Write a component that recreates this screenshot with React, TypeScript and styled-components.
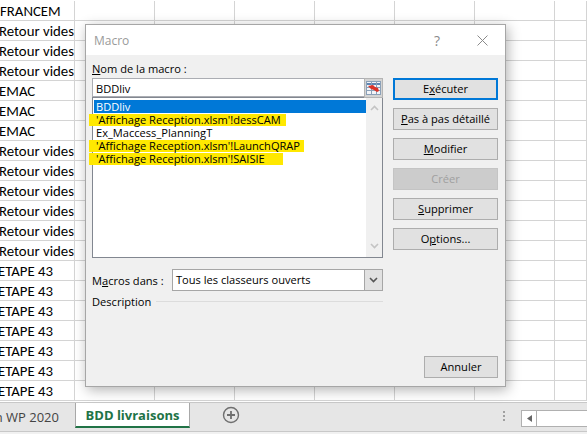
import React from "react";
import styled, { createGlobalStyle } from "styled-components";

const GlobalStyle = createGlobalStyle`
  html, body {
    margin: 0;
    padding: 0;
    background: #fff;
  }
  body {
    width: 587px;
    height: 434px;
    overflow: hidden;
  }
`;

const Page = styled.div`
  position: relative;
  width: 587px;
  height: 434px;
  overflow: hidden;
  background: #fff;
`;

// Sheet
const Sheet = styled.div`
  display: grid;
  grid-template-columns: 75px repeat(6, 80px) 32px;
  grid-auto-rows: 20px;
  box-sizing: border-box;
  height: 402px;
  padding-top: 1px;
  overflow: hidden;
`;

const Cell = styled.div<{ $shift?: number }>`
  border-right: 1px solid #d4d4d4;
  border-bottom: 1px solid #d4d4d4;
  box-sizing: border-box;
  font: 14.8px/20px Carlito, Lato, sans-serif;
  color: #000;
  white-space: nowrap;
  overflow: hidden;
  text-indent: ${(p) => p.$shift ?? 0}px;
`;

// Tabs
const TabBar = styled.div`
  display: flex;
  align-items: flex-start;
  height: 28px;
  background: #e6e6e6;
  border-top: 1px solid #c8c8c8;
  border-bottom: 1px solid #c8c8c8;
  overflow: hidden;
`;

const OtherTab = styled.div`
  width: 75px;
  height: 24px;
  text-align: right;
  padding-right: 16px;
  box-sizing: border-box;
  white-space: nowrap;
  overflow: hidden;
  font: 13px/29px "Open Sans", sans-serif;
  color: #444;
  direction: rtl;
`;

const ActiveTab = styled.div`
  width: 115px;
  height: 26px;
  box-sizing: border-box;
  background: #fff;
  border-left: 1px solid #a8a8a8;
  border-right: 1px solid #a8a8a8;
  border-bottom: 2px solid #217346;
  color: #217346;
  font: 700 13px/27px "Open Sans", sans-serif;
  text-align: center;
  margin-top: -1px;
`;

const AddTab = styled.div`
  margin: 3px 0 0 32px;
  width: 18px;
  height: 18px;
  color: #6f6f6f;
`;

const TabSpacer = styled.div`
  flex: 1;
`;

const SplitDots = styled.div`
  display: flex;
  flex-direction: column;
  gap: 2px;
  margin: 8px 16px 0 0;
  & > i {
    width: 2px;
    height: 2px;
    background: #a0a0a0;
  }
`;

const ScrollLeft = styled.div`
  display: flex;
  align-items: center;
  justify-content: center;
  width: 14px;
  height: 15px;
  margin-top: 7px;
  background: #fff;
  border: 1px solid #b0b0b0;
  color: #666;
`;

const ScrollTrack = styled.div`
  width: 50px;
  height: 15px;
  margin-top: 7px;
  background: #fff;
  border: 1px solid #b0b0b0;
  border-left: 0;
  border-right: 0;
`;

const Status = styled.div`
  height: 3px;
  background: #f1f1f1;
`;

// Dialog
const Dialog = styled.div`
  position: absolute;
  left: 85px;
  top: 24px;
  width: 421px;
  height: 363px;
  box-sizing: border-box;
  border: 1px solid #a6a6a6;
  background: #f0f0f0;
  box-shadow: 2px 3px 12px rgba(0, 0, 0, 0.3);
  font: 11.1px "Open Sans", sans-serif;
  color: #000;
  display: flex;
  flex-direction: column;
`;

const TitleBar = styled.div`
  display: flex;
  align-items: center;
  height: 30px;
  background: #fff;
  padding: 0 17px 0 8px;
  color: #9a9a9a;
  font-size: 12px;
`;

const Title = styled.div`
  flex: 1;
`;

const Help = styled.div`
  margin-right: 37px;
  font-size: 14px;
  color: #8a8a8a;
`;

const Body = styled.div`
  flex: 1;
  display: grid;
  grid-template-columns: 291px 105px;
  column-gap: 10px;
  padding: 0 0 8px 6px;
  min-height: 0;
`;

const LeftColumn = styled.div`
  display: flex;
  flex-direction: column;
`;

const FieldLabel = styled.label`
  display: block;
  line-height: 16px;
  margin-top: 6px;
  height: 17px;
`;

const NameRow = styled.div`
  display: flex;
  height: 19px;
`;

const NameInput = styled.div`
  flex: 1;
  background: #fff;
  border: 1px solid #abadb3;
  border-right: 0;
  padding-left: 3px;
  line-height: 19px;
`;

const RefButton = styled.div`
  width: 19px;
  height: 20px;
  display: flex;
  align-items: center;
  justify-content: center;
  background: #d4d4d4;
  border: 1px solid #b4b4b4;
  box-sizing: border-box;
  position: relative;
  z-index: 1;
`;

const ListBox = styled.div`
  position: relative;
  height: 161px;
  box-sizing: border-box;
  background: #fff;
  border: 1px solid #828790;
  padding: 2px 16px 0 1px;
`;

const ListRow = styled.div<{ $selected?: boolean }>`
  position: relative;
  height: 13px;
  line-height: 13px;
  padding-left: 2px;
  white-space: nowrap;
  background: ${(p) => (p.$selected ? "#0078d7" : "transparent")};
  color: ${(p) => (p.$selected ? "#fff" : "#000")};
`;

const RowText = styled.span`
  position: relative;
`;

const Marker = styled.span<{ $width: number }>`
  position: absolute;
  left: -5px;
  top: 1px;
  height: 12px;
  width: ${(p) => p.$width}px;
  background: #ffe800;
`;

const ListScroll = styled.div`
  position: absolute;
  top: 0;
  right: 0;
  bottom: 0;
  width: 16px;
  background: #f0f0f0;
  display: flex;
  flex-direction: column;
  justify-content: space-between;
  align-items: center;
  padding: 7px 0 8px;
  box-sizing: border-box;
  color: #c4c4c4;
`;

const ScopeRow = styled.div`
  display: flex;
  align-items: center;
  margin-top: 11px;
  height: 22px;
`;

const ScopeLabel = styled.label`
  width: 80px;
`;

const Combo = styled.div`
  flex: 1;
  display: flex;
  height: 22px;
  box-sizing: border-box;
  background: #fff;
  border: 1px solid #a6a6a6;
`;

const ComboText = styled.div`
  flex: 1;
  padding-left: 3px;
  line-height: 20px;
`;

const ComboArrow = styled.div`
  width: 17px;
  display: flex;
  align-items: center;
  justify-content: center;
  background: #e1e1e1;
  border-left: 1px solid #a6a6a6;
  color: #555;
`;

const DescriptionRow = styled.div`
  display: flex;
  align-items: center;
  gap: 5px;
  margin-top: 2px;
  height: 16px;
  &::after {
    content: "";
    flex: 1;
    height: 1px;
    background: #dcdcdc;
  }
`;

const RightColumn = styled.div`
  display: flex;
  flex-direction: column;
  padding-top: 23px;
`;

const ActionButton = styled.div<{ $primary?: boolean; $disabled?: boolean }>`
  height: 22px;
  margin-bottom: 8px;
  box-sizing: border-box;
  text-align: center;
  line-height: ${(p) => (p.$primary ? 18 : 20)}px;
  background: ${(p) => (p.$disabled ? "#cccccc" : "#e1e1e1")};
  border: ${(p) => (p.$primary ? "2px solid #0078d7" : p.$disabled ? "1px solid #c4c4c4" : "1px solid #adadad")};
  color: ${(p) => (p.$disabled ? "#a0a0a0" : "#000")};
`;

const CancelButton = styled(ActionButton)`
  width: 74px;
  margin: auto 0 0 auto;
`;

const macros = [
  { name: "BDDliv", selected: true },
  { name: "'Affichage Reception.xlsm'!dessCAM", marker: 197 },
  { name: "Ex_Maccess_PlanningT" },
  { name: "'Affichage Reception.xlsm'!LaunchQRAP", marker: 215 },
  { name: "'Affichage Reception.xlsm'!SAISIE", marker: 194 },
];

const sheetRows = [
  { text: "FRANCEM", shift: 0 },
  ...Array(3).fill({ text: "Retour vides", shift: -1 }),
  ...Array(3).fill({ text: "EMAC", shift: -1 }),
  ...Array(6).fill({ text: "Retour vides", shift: -1 }),
  ...Array(7).fill({ text: "ETAPE 43", shift: -2 }),
];

const RefIcon = () => (
  <svg width="15" height="14" viewBox="0 0 15 14">
    <rect x="0.5" y="0.5" width="14" height="13" fill="#f2f4f8" stroke="#8aa0b8" />
    <path d="M1 3h13" stroke="#5f86b3" strokeWidth="2" />
    <path d="M0 6.5h15M0 9.5h15M5.5 0v14M10.5 0v14" stroke="#8aa0b8" />
    <path d="M2 5l5-1 2 2 3 1 1 3-2 1-3-2-3-1z" fill="#dc3328" />
  </svg>
);

const Chevron = ({ up }: { up?: boolean }) => (
  <svg width="9" height="6" viewBox="0 0 9 6">
    <path
      d={up ? "M1 5l3.5-3.5L8 5" : "M1 1l3.5 3.5L8 1"}
      fill="none"
      stroke="currentColor"
      strokeWidth="1.6"
    />
  </svg>
);

export default function App() {
  return (
    <Page>
      <GlobalStyle />
      <Sheet>
        {sheetRows.map((row, i) => (
          <React.Fragment key={i}>
            <Cell $shift={row.shift}>{row.text}</Cell>
            {Array.from({ length: 7 }).map((_, j) => (
              <Cell key={j} />
            ))}
          </React.Fragment>
        ))}
      </Sheet>
      <TabBar>
        <OtherTab>n WP 2020</OtherTab>
        <ActiveTab>BDD livraisons</ActiveTab>
        <AddTab>
          <svg width="18" height="18" viewBox="0 0 18 18">
            <circle cx="9" cy="9" r="7.5" fill="none" stroke="currentColor" strokeWidth="1.4" />
            <path d="M9 5v8M5 9h8" stroke="currentColor" strokeWidth="1.8" />
          </svg>
        </AddTab>
        <TabSpacer />
        <SplitDots>
          <i />
          <i />
          <i />
        </SplitDots>
        <ScrollLeft>
          <svg width="5" height="7" viewBox="0 0 5 7">
            <path d="M5 0v7L0 3.5z" fill="currentColor" />
          </svg>
        </ScrollLeft>
        <ScrollTrack />
      </TabBar>
      <Status />

      <Dialog>
        <TitleBar>
          <Title>Macro</Title>
          <Help>?</Help>
          <svg width="11" height="11" viewBox="0 0 11 11">
            <path d="M0.5 0.5l10 10M10.5 0.5l-10 10" stroke="#8a8a8a" />
          </svg>
        </TitleBar>
        <Body>
          <LeftColumn>
            <FieldLabel>
              <u>N</u>om de la macro :
            </FieldLabel>
            <NameRow>
              <NameInput>BDDliv</NameInput>
              <RefButton>
                <RefIcon />
              </RefButton>
            </NameRow>
            <ListBox>
              {macros.map((m) => (
                <ListRow key={m.name} $selected={m.selected}>
                  {m.marker && <Marker $width={m.marker} />}
                  <RowText>{m.name}</RowText>
                </ListRow>
              ))}
              <ListScroll>
                <Chevron up />
                <Chevron />
              </ListScroll>
            </ListBox>
            <ScopeRow>
              <ScopeLabel>
                M<u>a</u>cros dans :
              </ScopeLabel>
              <Combo>
                <ComboText>Tous les classeurs ouverts</ComboText>
                <ComboArrow>
                  <Chevron />
                </ComboArrow>
              </Combo>
            </ScopeRow>
            <DescriptionRow>Description</DescriptionRow>
          </LeftColumn>
          <RightColumn>
            <ActionButton $primary>
              E<u>x</u>écuter
            </ActionButton>
            <ActionButton>
              <u>P</u>as à pas détaillé
            </ActionButton>
            <ActionButton>
              <u>M</u>odifier
            </ActionButton>
            <ActionButton $disabled>Créer</ActionButton>
            <ActionButton>
              <u>S</u>upprimer
            </ActionButton>
            <ActionButton>
              O<u>p</u>tions...
            </ActionButton>
            <CancelButton>Annuler</CancelButton>
          </RightColumn>
        </Body>
      </Dialog>
    </Page>
  );
}
